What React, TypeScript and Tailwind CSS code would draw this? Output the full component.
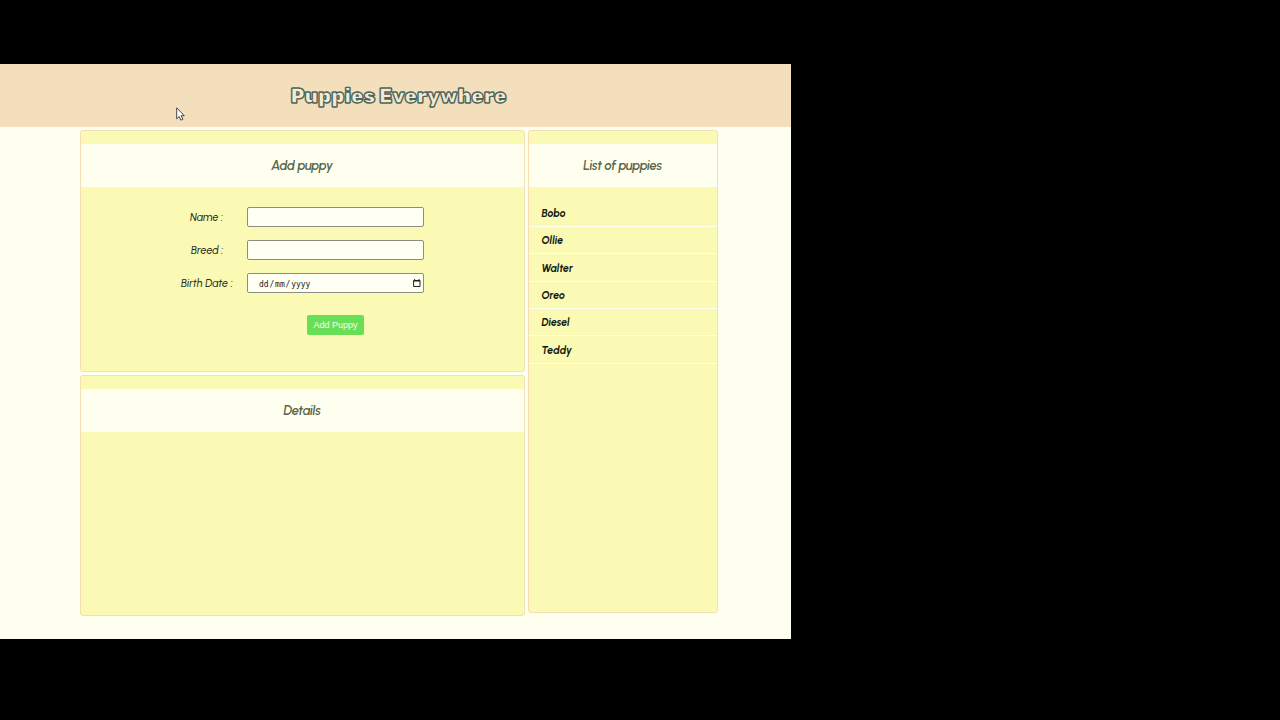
const puppies = ['Bobo', 'Ollie', 'Walter', 'Oreo', 'Diesel', 'Teddy'];

function Heading({ text }: { text: string }) {
  return (
    <h2 className="mt-[13px] flex h-[43px] items-center justify-center bg-[#fffff0] pr-px text-[13px] font-semibold italic tracking-[-0.33px] text-[#59654a]">
      {text}
    </h2>
  );
}

function Field({ label, labelClass, date = false }: { label: string; labelClass: string; date?: boolean }) {
  return (
    <div className="flex h-5 items-center">
      <label className="w-[66px] shrink-0 whitespace-nowrap pt-[2px] text-[10.7px] font-medium italic text-[#2c3226]">
        <span className={labelClass}>{label}</span>
      </label>
      <div className="flex h-5 w-[177px] items-center justify-between rounded-[2px] border border-[#8c8c86] bg-[#fffff4] pl-[11px] pr-[2px]">
        {date && (
          <>
            <span className="mt-[3px] flex font-['DejaVu_Sans_Mono','Liberation_Mono',monospace] text-[8px] text-[#222]">
              <span>dd</span>
              <span className="px-[0.8px]">/</span>
              <span>mm</span>
              <span className="px-[0.8px]">/</span>
              <span>yyyy</span>
            </span>
            <svg width="8" height="9" viewBox="0 0 8 9" fill="none" stroke="#222">
              <path d="M.6 1.5h6.4v6H.6zM.5 2h6.6M1.6 0v2M6 0v2" />
            </svg>
          </>
        )}
      </div>
    </div>
  );
}

export default function App() {
  return (
    <div className="h-[720px] w-[1280px] overflow-hidden bg-black pt-16 font-['Urbanist','Lato',sans-serif]">
      <main className="relative h-[575px] w-[791px] bg-[#fffff0]">
        <header className="flex h-[63px] items-center justify-center bg-[#f3dfbb]">
          <h1 className="ml-[7px]">
            <svg width="230" height="40" viewBox="-5 -5 230 40" className="font-['Rubik','Inter',sans-serif]">
              <text x="1.5" y="22" textLength="216" lengthAdjust="spacingAndGlyphs" fontSize="20.4" fontWeight="900" fill="#f5e9cf" stroke="#4c655b" strokeWidth="1.4">Puppies Everywhere</text>
            </svg>
          </h1>
        </header>
        <div className="flex gap-[3px] pl-20 pt-[3px]">
          <div className="flex w-[445px] flex-col gap-[3px]">
            <section className="h-[242px] rounded-[3px] border border-[#f5deb3] bg-[#fafab4]">
              <Heading text="Add puppy" />
              <form className="flex flex-col gap-[13.2px] pl-[100px] pt-[20px]">
                <Field label="Name :" labelClass="ml-[9px]" />
                <Field label="Breed :" labelClass="ml-[10px]" />
                <Field label="Birth Date :" labelClass="" date />
                <button type="button" className="ml-[126px] mt-[8.4px] h-5 w-[57px] rounded-[2px] bg-[#69df58] pt-px font-['Liberation_Sans',sans-serif] text-[9px] text-[#f3ffe8]">Add Puppy</button>
              </form>
            </section>
            <section className="h-[241px] rounded-[3px] border border-[#f5deb3] bg-[#fafab4]">
              <Heading text="Details" />
            </section>
          </div>
          <aside className="h-[483px] w-[190px] rounded-[3px] border border-[#f5deb3] bg-[#fafab4]">
            <Heading text="List of puppies" />
            <ul className="pt-[12.5px]">
              {puppies.map((name) => (
                <li key={name} className="flex h-[27.4px] items-center border-b border-[#fffff0] pl-[12.5px] pt-[2px] text-[10.6px] font-bold italic text-[#151b12]">{name}</li>
              ))}
            </ul>
          </aside>
        </div>
        <svg className="absolute left-[176px] top-[43px]" width="9" height="14" viewBox="0 0 9 14">
          <path d="M.7.8v11l2.5-2.3 1.7 3.7 2-1-1.7-3.5h3.1z" fill="#fff" stroke="#333" strokeWidth=".9" />
        </svg>
      </main>
    </div>
  );
}
